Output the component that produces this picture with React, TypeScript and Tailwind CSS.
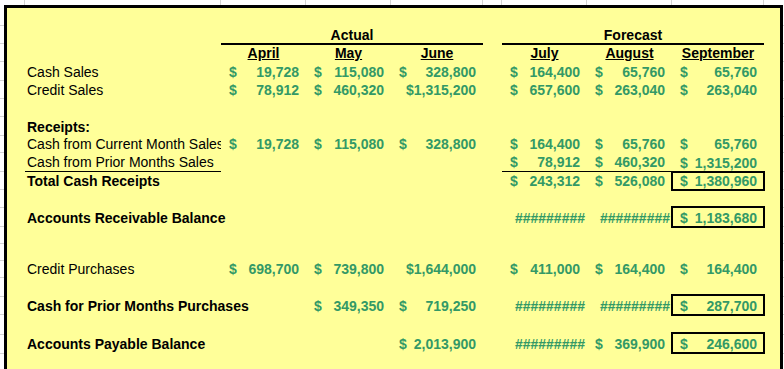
import type { ReactNode } from "react";

const cols = "grid grid-cols-[18px_196px_85px_85px_92px_19px_85px_85px_92px_16px]";
const boxed = "outline-2 outline-black outline-offset-[-1px]";

// gridline widths of the sheet around the yellow block
const topCells = ["w-[25px]", "w-[196px]", "w-[85px]", "w-[85px]", "w-[92px]", "w-[19px]", "w-[85px]", "w-[85px]", "w-[92px]"];
const sideRows = [
  "h-[21px]", "h-[18px]", "h-[18px]", "h-[19px]", "h-[18px]", "h-[18px]", "h-[19px]", "h-[17px]", "h-[19px]", "h-[18px]",
  "h-[18px]", "h-[19px]", "h-[17px]", "h-[17px]", "h-[17px]", "h-[19px]", "h-[18px]", "h-[20px]", "h-[19px]", "h-[18px]",
];

function Label({ children, bold = false, clip = false, line = false }: { children: ReactNode; bold?: boolean; clip?: boolean; line?: boolean }) {
  return (
    <div
      className={`col-start-2 flex items-end whitespace-nowrap pl-[2px] ${bold ? "font-bold" : ""} ${clip ? "overflow-hidden" : ""} ${line ? "border-b border-black" : ""}`}
    >
      {children}
    </div>
  );
}

function Money({ col, v, joined = false, box = false, line = false }: { col: string; v: string; joined?: boolean; box?: boolean; line?: boolean }) {
  return (
    <div
      className={`${col} flex items-end whitespace-nowrap font-bold text-[#339966] ${joined ? "justify-end pr-[7px]" : "justify-between pl-[8px] pr-[7px]"} ${box ? boxed : ""} ${line ? "border-b border-black" : ""}`}
    >
      {joined ? (
        <span>{v}</span>
      ) : (
        <>
          <span>$</span>
          <span>{v}</span>
        </>
      )}
    </div>
  );
}

function Hash({ col }: { col: string }) {
  return (
    <div className={`${col} flex items-end justify-end overflow-hidden whitespace-nowrap pr-[2px] font-bold text-[#339966]`}>
      #########
    </div>
  );
}

function Month({ col, name }: { col: string; name: string }) {
  return (
    <div className={`${col} flex items-end justify-center font-bold underline`}>
      {name}
    </div>
  );
}

export default function App() {
  return (
    <div className="flex h-[369px] w-[784px] flex-col overflow-hidden bg-white font-['Liberation_Sans',Arial,sans-serif] text-[14px] leading-[16px] text-black">
      {/* sheet gridlines above the block */}
      <div className="flex h-[5px] shrink-0">
        {topCells.map((w, i) => (
          <div key={i} className={`${w} shrink-0 border-r border-[#d4d4d4]`} />
        ))}
        <div className="flex-1" />
      </div>

      <div className="flex flex-1">
        <div className="flex w-[4px] shrink-0 flex-col">
          {sideRows.map((h, i) => (
            <div key={i} className={`${h} shrink-0 border-b border-[#d4d4d4]`} />
          ))}
        </div>

        <div className="w-[779px] shrink-0 border-x-[3px] border-t-[3px] border-black bg-[#ffff99]">
          <div className={`${cols} h-[17px]`} />

          {/* Actual / Forecast */}
          <div className={`${cols} h-[20px]`}>
            <div className="col-span-3 col-start-3 flex items-end justify-center border-b-2 border-black font-bold">Actual</div>
            <div className="col-span-3 col-start-7 flex items-end justify-center border-b-2 border-black font-bold">Forecast</div>
          </div>

          <div className={`${cols} h-[16px]`}>
            <Month col="col-start-3" name="April" />
            <Month col="col-start-4" name="May" />
            <Month col="col-start-5" name="June" />
            <Month col="col-start-7" name="July" />
            <Month col="col-start-8" name="August" />
            <Month col="col-start-9" name="September" />
          </div>

          <div className={`${cols} h-[19px]`}>
            <Label>Cash Sales</Label>
            <Money col="col-start-3" v="19,728" />
            <Money col="col-start-4" v="115,080" />
            <Money col="col-start-5" v="328,800" />
            <Money col="col-start-7" v="164,400" />
            <Money col="col-start-8" v="65,760" />
            <Money col="col-start-9" v="65,760" />
          </div>

          <div className={`${cols} h-[18px]`}>
            <Label>Credit Sales</Label>
            <Money col="col-start-3" v="78,912" />
            <Money col="col-start-4" v="460,320" />
            <Money col="col-start-5" v="$1,315,200" joined />
            <Money col="col-start-7" v="657,600" />
            <Money col="col-start-8" v="263,040" />
            <Money col="col-start-9" v="263,040" />
          </div>

          <div className={`${cols} h-[18px]`} />

          <div className={`${cols} h-[19px]`}>
            <Label bold>Receipts:</Label>
          </div>

          <div className={`${cols} h-[17px]`}>
            <Label clip>Cash from Current Month Sales</Label>
            <Money col="col-start-3" v="19,728" />
            <Money col="col-start-4" v="115,080" />
            <Money col="col-start-5" v="328,800" />
            <Money col="col-start-7" v="164,400" />
            <Money col="col-start-8" v="65,760" />
            <Money col="col-start-9" v="65,760" />
          </div>

          <div className={`${cols} h-[20px] *:pb-[1px]`}>
            <Label line>Cash from Prior Months Sales</Label>
            <Money col="col-start-7" v="78,912" line />
            <Money col="col-start-8" v="460,320" line />
            <Money col="col-start-9" v="1,315,200" />
          </div>

          <div className={`${cols} h-[18px] *:pb-[1px]`}>
            <Label bold>Total Cash Receipts</Label>
            <Money col="col-start-7" v="243,312" />
            <Money col="col-start-8" v="526,080" />
            <Money col="col-start-9" v="1,380,960" box />
          </div>

          <div className={`${cols} h-[17px]`} />

          <div className={`${cols} h-[20px] *:pb-[1px]`}>
            <Label bold>Accounts Receivable Balance</Label>
            <Hash col="col-start-7" />
            <Hash col="col-start-8" />
            <Money col="col-start-9" v="1,183,680" box />
          </div>

          <div className={`${cols} h-[16px]`} />
          <div className={`${cols} h-[16px]`} />

          <div className={`${cols} h-[18px]`}>
            <Label>Credit Purchases</Label>
            <Money col="col-start-3" v="698,700" />
            <Money col="col-start-4" v="739,800" />
            <Money col="col-start-5" v="$1,644,000" joined />
            <Money col="col-start-7" v="411,000" />
            <Money col="col-start-8" v="164,400" />
            <Money col="col-start-9" v="164,400" />
          </div>

          <div className={`${cols} h-[18px]`} />

          <div className={`${cols} h-[20px] *:pb-[1px]`}>
            <Label bold>Cash for Prior Months Purchases</Label>
            <Money col="col-start-4" v="349,350" />
            <Money col="col-start-5" v="719,250" />
            <Hash col="col-start-7" />
            <Hash col="col-start-8" />
            <Money col="col-start-9" v="287,700" box />
          </div>

          <div className={`${cols} h-[18px]`} />

          <div className={`${cols} h-[20px] *:pb-[1px]`}>
            <Label bold>Accounts Payable Balance</Label>
            <Money col="col-start-5" v="2,013,900" />
            <Hash col="col-start-7" />
            <Money col="col-start-8" v="369,900" />
            <Money col="col-start-9" v="246,600" box />
          </div>

          <div className={`${cols} h-[18px]`} />
        </div>

        <div className="flex w-[1px] shrink-0 flex-col">
          {sideRows.map((h, i) => (
            <div key={i} className={`${h} shrink-0 border-b border-[#d4d4d4]`} />
          ))}
        </div>
      </div>
    </div>
  );
}
